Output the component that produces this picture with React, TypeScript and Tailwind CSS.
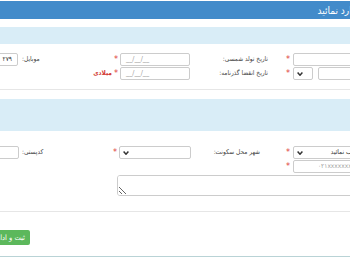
import React from 'react';

const font = { fontFamily: '"DejaVu Sans Condensed", "DejaVu Sans", sans-serif' };

const Star = () => (
  <span className="w-[10px] shrink-0 text-center text-[9px] leading-none text-[#e0413d]">*</span>
);

const Chevron = () => (
  <svg width="6" height="4" viewBox="0 0 6 4" className="shrink-0">
    <path d="M0.6 0.6 L3 3.2 L5.4 0.6" stroke="#333" strokeWidth="1.5" fill="none" />
  </svg>
);

const box = 'h-[13px] shrink-0 rounded-[2px] border border-[#cccccc] bg-white';

function DateInput() {
  return (
    <div dir="ltr" className={`${box} w-[70px] flex items-center pl-[5px] text-[7px] text-[#9a9a9a]`}>
      __/__/__
    </div>
  );
}

export default function App() {
  return (
    <div dir="rtl" style={font} className="w-[350px] h-[260px] overflow-hidden bg-white flex flex-col">
      {/* panel heading */}
      <div className="mt-[1px] h-[18px] shrink-0 bg-[#428bca] flex items-center">
        <span className="-mr-[6px] whitespace-nowrap text-[10px] text-white">وارد نمائید</span>
      </div>

      <div className="mt-[8px] h-[17px] shrink-0 bg-[#d9edf7]" />

      {/* row 1 */}
      <div className="mt-[9px] flex items-center text-[6.5px] text-[#444]">
        <div className={`${box} w-[87px] -mr-[30px]`} />
        <Star />
        <div className="w-[93px] shrink-0 pr-[15px] whitespace-nowrap">تاریخ تولد شمسی:</div>
        <DateInput />
        <span className="w-[8px] shrink-0 text-center text-[9px] leading-none text-[#e0413d]">*</span>
        <div className="w-[94px] shrink-0 pl-[4px] text-left whitespace-nowrap">موبایل:</div>
        <div className={`${box} w-[40px] flex items-center pr-[5px] text-[6.5px] text-[#333]`}>۲۷۹</div>
      </div>

      {/* row 2 */}
      <div className="mt-[1px] flex items-center text-[6.5px] text-[#444]">
        <div className={`${box} w-[62px] -mr-[30px]`} />
        <div className={`${box} w-[20px] mr-[5px] flex items-center justify-end pl-[3px]`}>
          <Chevron />
        </div>
        <Star />
        <div className="w-[93px] shrink-0 pr-[15px] whitespace-nowrap">تاریخ انقضا گذرنامه:</div>
        <DateInput />
        <span className="w-[8px] shrink-0 text-center text-[9px] leading-none text-[#e0413d]">*</span>
        <span className="whitespace-nowrap text-[6.5px] font-bold text-[#d23b35]">میلادی</span>
      </div>

      <div className="mt-[9px] h-px shrink-0 bg-[#e6e6e6]" />

      <div className="mt-[9px] h-[32px] shrink-0 bg-[#d9edf7]" />

      {/* row 3 */}
      <div className="mt-[15px] flex items-center text-[6.5px] text-[#444]">
        <div className={`${box} w-[75px] -mr-[18px] flex items-center justify-between pr-[5px] pl-[3px] text-[6.5px] text-[#333]`}>
          <span className="whitespace-nowrap">انتخاب نمائید</span>
          <Chevron />
        </div>
        <Star />
        <div className="w-[92px] shrink-0 pr-[23px] whitespace-nowrap">شهر محل سکونت:</div>
        <div className={`${box} w-[72px] flex items-center justify-end pl-[3px]`}>
          <Chevron />
        </div>
        <span className="w-[8px] shrink-0 text-center text-[9px] leading-none text-[#e0413d]">*</span>
        <div className="w-[92px] shrink-0 pl-[3px] text-left whitespace-nowrap">کدپستی:</div>
        <div className={`${box} w-[40px]`} />
      </div>

      {/* row 4 */}
      <div className="mt-[1px] flex items-center">
        <div className={`${box} w-[75px] -mr-[18px] flex items-center pr-[5px] text-[6.5px] text-[#a0a0a0] whitespace-nowrap`}>
          ۰۲۱xxxxxxxxxx
        </div>
        <Star />
      </div>

      {/* address */}
      <div className="mt-[2px] flex">
        <textarea className="h-[21px] w-[251px] shrink-0 -mr-[18px] rounded-[3px] border border-[#cccccc] bg-white" />
      </div>

      <div className="mt-[15px] h-px shrink-0 bg-[#e6e6e6]" />

      {/* actions */}
      <div className="mt-[18px] flex">
        <button className="mr-[320px] h-[15px] shrink-0 whitespace-nowrap rounded-[2px] bg-[#5cb85c] px-[5px] text-[7.5px] text-white">
          ثبت و ادامه
        </button>
      </div>

      <div className="mt-[11px] h-px shrink-0 bg-[#b9d3d6]" />
    </div>
  );
}
